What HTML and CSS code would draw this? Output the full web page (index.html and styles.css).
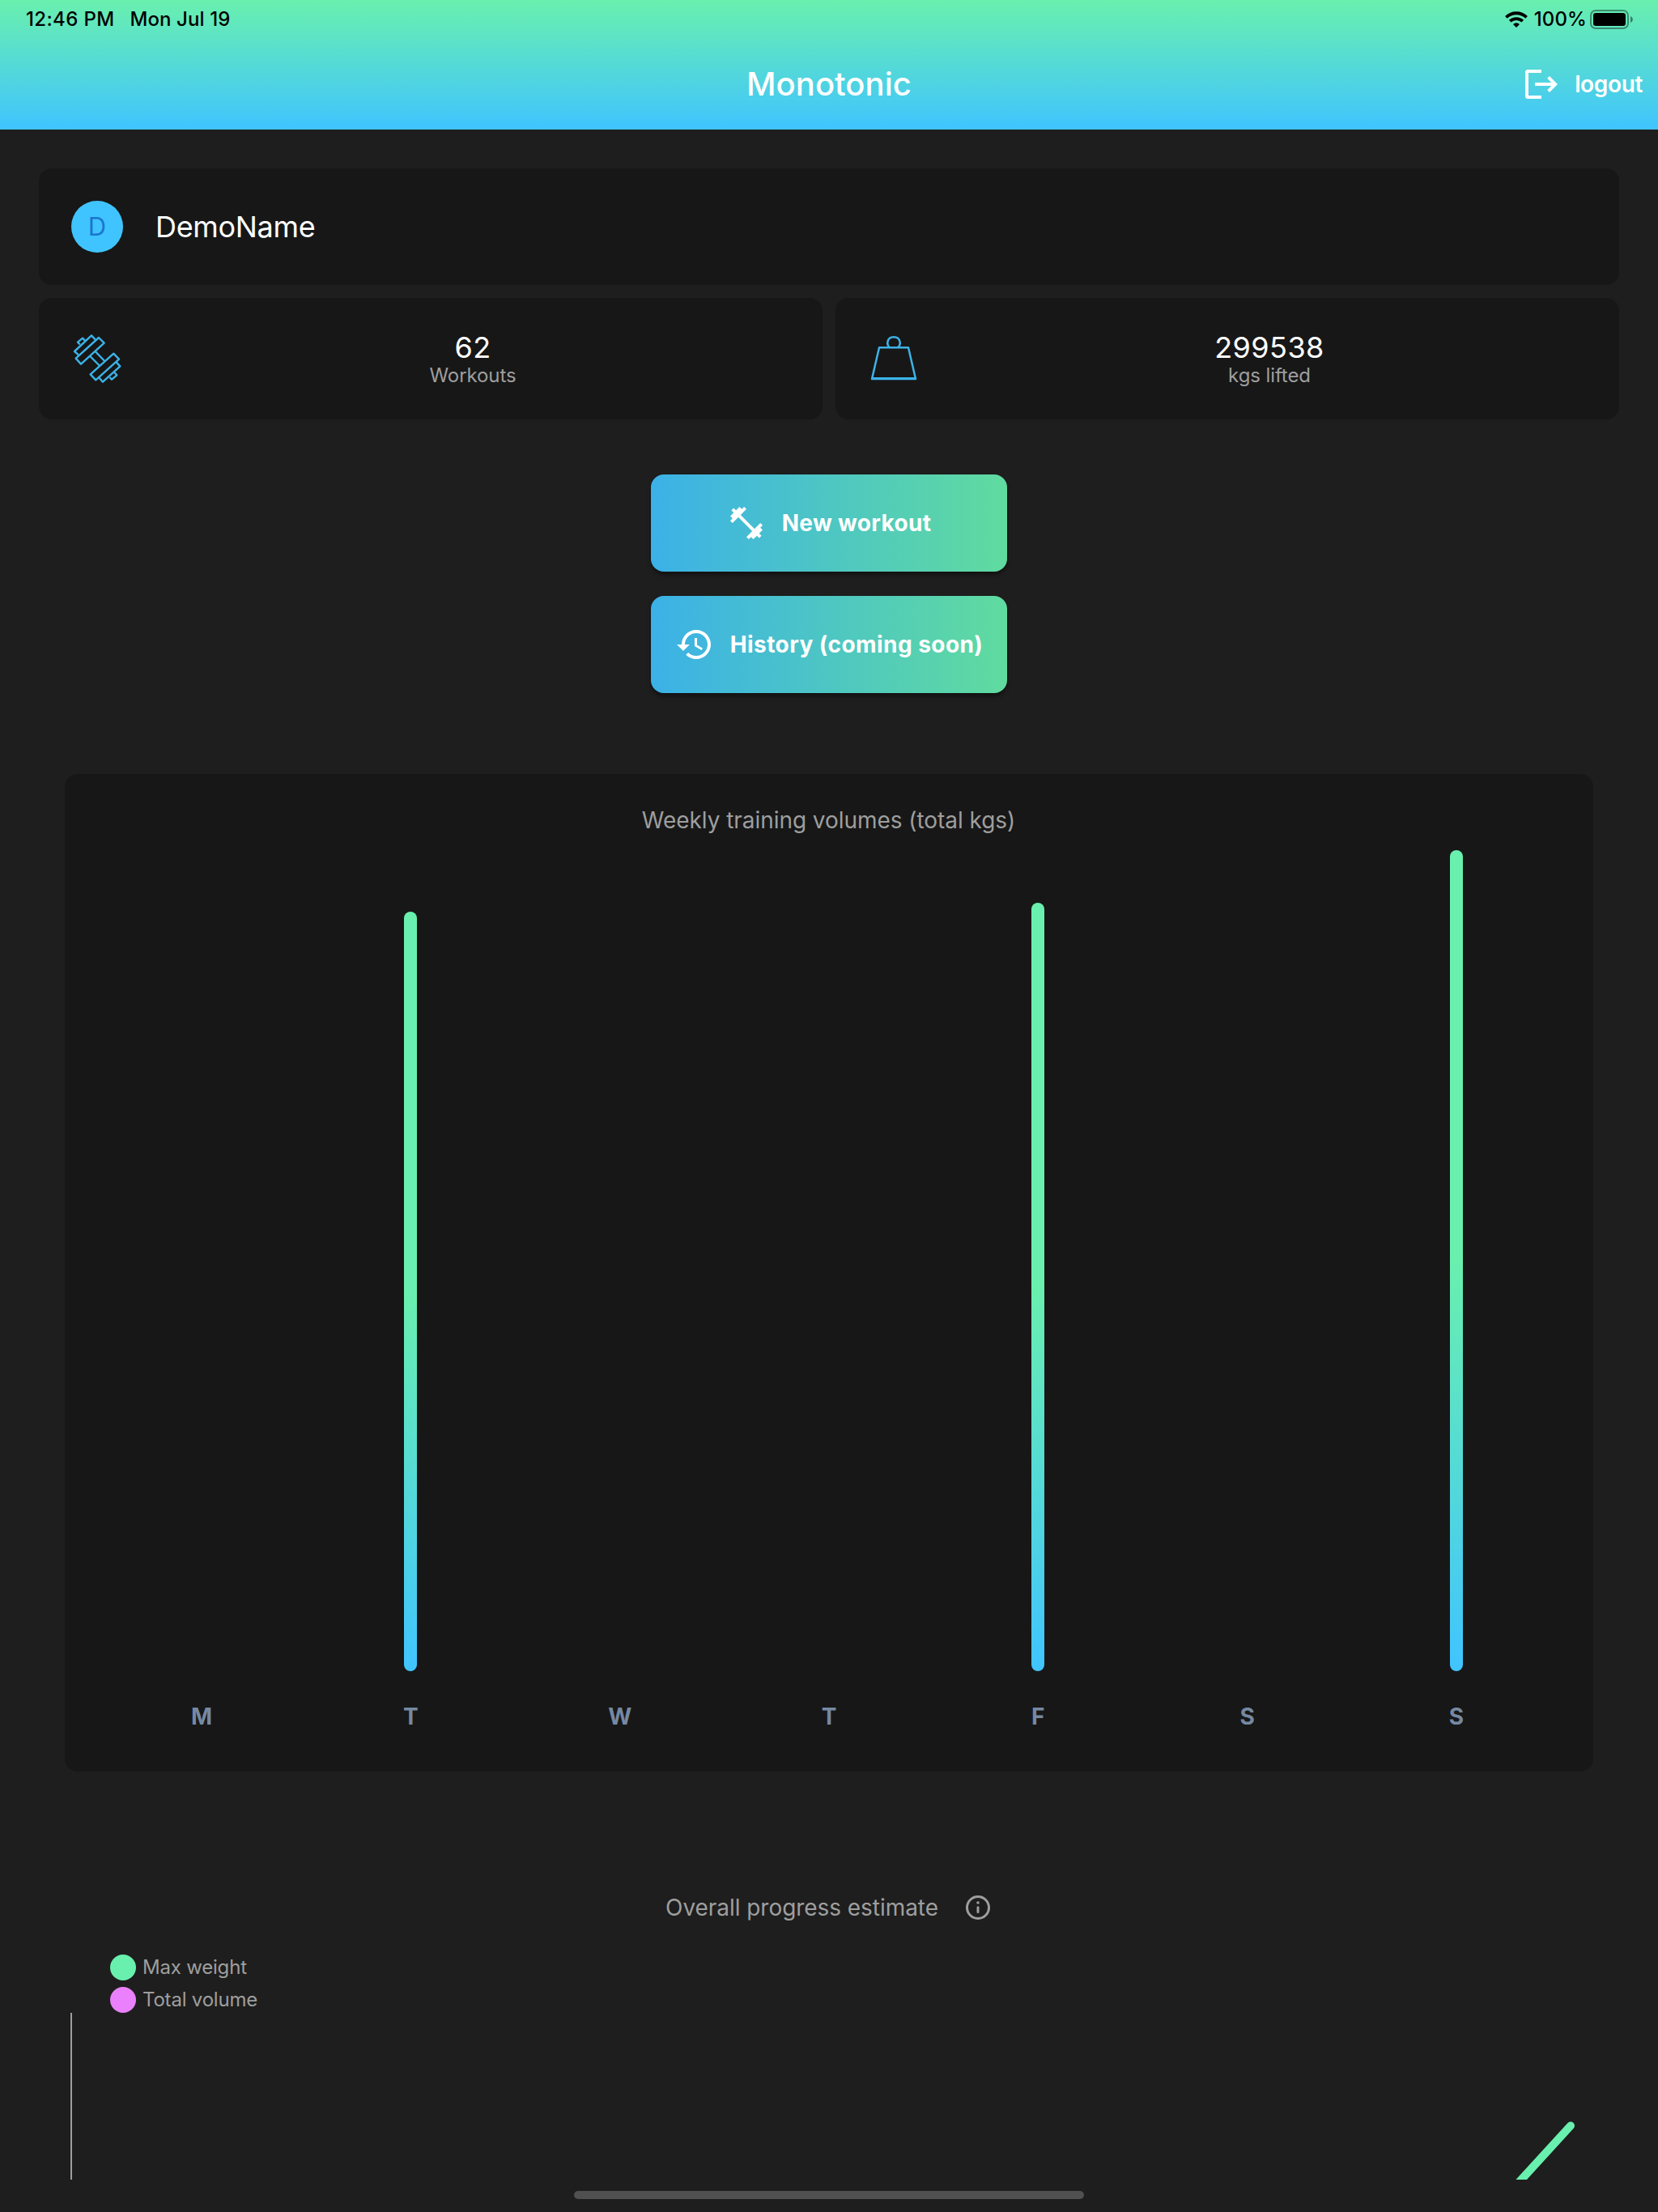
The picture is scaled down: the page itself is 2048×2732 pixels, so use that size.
FILE: index.html
```
<!DOCTYPE html>
<html lang="en">
<head>
<meta charset="utf-8">
<title>Monotonic</title>
<link rel="stylesheet" href="styles.css">
</head>
<body>
<div class="screen">
  <header class="header">
    <div class="status">
      <div class="status-left"><span class="time">12:46 PM</span><span class="date">Mon Jul 19</span></div>
      <div class="status-right">
        <svg class="wifi" width="28" height="20" viewBox="0 0 28 20" fill="none" stroke="#000" stroke-width="3.8">
          <path d="M1.4 7.400a18 18 0 0 1 25.200 0"/>
          <path d="M6.200 12.200a11.200 11.200 0 0 1 15.600 0"/>
          <path d="M14 20l-4-4.100a5.800 5.800 0 0 1 8 0z" fill="#000" stroke="none"/>
        </svg>
        <span class="charge">100%</span>
        <svg width="54" height="24" viewBox="0 0 54 24">
          <rect x="1" y="1" width="46" height="22" rx="6" fill="none" stroke="#000" stroke-opacity=".4" stroke-width="2"/>
          <rect x="4" y="4" width="40" height="16" rx="3.200"/>
          <path d="M50 8c3.800 1.400 3.800 6.600 0 8z" fill-opacity=".45"/>
        </svg>
      </div>
    </div>
    <div class="nav">
      <span></span>
      <h1 class="title">Monotonic</h1>
      <div class="logout">
        <svg width="40" height="36" viewBox="0 0 40 36" fill="#fff">
          <path d="M20 0H3.500Q0 0 0 3.500V32.500Q0 36 3.500 36H20V32H4V4H20z"/>
          <path d="M27.200 10.800L30 8L40 18L30 28L27.200 25.200L32.400 20H12V16H32.400z"/>
        </svg>
        <span>logout</span>
      </div>
    </div>
  </header>

  <main class="main">
    <section class="card profile">
      <div class="avatar">D</div>
      <div class="name">DemoName</div>
    </section>

    <section class="stats">
      <div class="card stat">
        <svg width="64" height="64" viewBox="144 633 192 192" fill="none" stroke="#3cb3e8" stroke-width="7.200" stroke-linejoin="round">
          <path d="M176 676L168 668L186 653L195 662"/>
          <path d="M171 715L156 702L219 643L233 658"/>
          <path d="M161 728L246 651L266 671L180 749z"/>
          <path d="M233 702L268 738M214 720L250 756"/>
          <path d="M215 787L301 710L321 731L235 808z"/>
          <path d="M248 800L261 815L325 757L311 742"/>
          <path d="M286 798L294 806L313 790L304 780"/>
        </svg>
        <div class="figure"><span class="value">62</span><span class="unit">Workouts</span></div>
      </div>
      <div class="card stat">
        <svg width="64" height="64" viewBox="0 0 64 64" fill="none" stroke="#3cb3e8" stroke-width="2.500" stroke-linejoin="round">
          <path d="M27 18.300C22.500 14.500 23.500 5.200 32 5.200S41.500 14.500 37 18.300"/>
          <path d="M14 18.300H50L59 57H5z"/>
          <path d="M5 56.600H59" stroke-width="3"/>
        </svg>
        <div class="figure"><span class="value">299538</span><span class="unit">kgs lifted</span></div>
      </div>
    </section>

    <section class="actions">
      <button class="action">
        <svg width="48" height="48" viewBox="0 0 24 24" fill="#fff"><path d="M20.570 14.860L22 13.430 20.570 12 17 15.570 8.430 7 12 3.430 10.570 2 9.140 3.430 7.710 2 5.570 4.140 4.140 2.710 2.710 4.140l1.430 1.430L2 7.710l1.430 1.430L2 10.570 3.430 12 7 8.430 15.570 17 12 20.570 13.430 22l1.430-1.430L16.290 22l2.140-2.140 1.430 1.430 1.430-1.430-1.430-1.430L22 16.290z"/></svg>
        <span>New workout</span>
      </button>
      <button class="action">
        <svg width="48" height="48" viewBox="0 0 24 24" fill="#fff"><path d="M13 3c-4.970 0-9 4.030-9 9H1l3.890 3.890.070.140L9 12H6c0-3.870 3.130-7 7-7s7 3.130 7 7-3.130 7-7 7c-1.930 0-3.680-.790-4.940-2.060l-1.420 1.420C8.270 19.990 10.510 21 13 21c4.970 0 9-4.030 9-9s-4.030-9-9-9zm-1 5v5l4.280 2.540.720-1.210-3.500-2.080V8H12z"/></svg>
        <span class="wide">History (coming soon)</span>
      </button>
    </section>

    <section class="card chart">
      <h2 class="caption">Weekly training volumes (total kgs)</h2>
      <div class="bars">
        <div class="day"><span class="label">M</span></div>
        <div class="day"><i class="bar" style="height:938px"></i><span class="label">T</span></div>
        <div class="day"><span class="label">W</span></div>
        <div class="day"><span class="label">T</span></div>
        <div class="day"><i class="bar" style="height:949px"></i><span class="label">F</span></div>
        <div class="day"><span class="label">S</span></div>
        <div class="day"><i class="bar" style="height:1014px"></i><span class="label">S</span></div>
      </div>
    </section>

    <section class="progress">
      <div class="progress-head">
        <h2 class="caption">Overall progress estimate</h2>
        <svg width="36" height="36" viewBox="0 0 36 36" fill="none" stroke="#9e9e9e" stroke-linecap="round">
          <circle cx="18" cy="18" r="13.500" stroke-width="3"/>
          <path d="M18 17.800V23.600" stroke-width="3"/>
          <circle cx="18" cy="12" r="1.800" fill="#9e9e9e" stroke="none"/>
        </svg>
      </div>
      <ul class="legend">
        <li><i class="dot green"></i>Max weight</li>
        <li><i class="dot pink"></i>Total volume</li>
      </ul>
      <svg class="plot" width="1913" height="206" viewBox="0 0 1913 206" fill="none">
        <path d="M1 0V206" stroke="#9e9e9e" stroke-width="2"/>
        <path d="M1853 139.500L1773 227" stroke="#69f0ae" stroke-width="10" stroke-linecap="round"/>
      </svg>
    </section>
  </main>

  <footer class="home"><div class="home-bar"></div></footer>
</div>
</body>
</html>
```
FILE: styles.css
```
* { box-sizing: border-box; margin: 0; padding: 0; }

body {
  background: #1e1e1e;
  color: #fff;
  font-family: Inter, "Liberation Sans", sans-serif;
}

svg { display: block; flex: none; }

.screen {
  display: flex;
  flex-direction: column;
  width: 2048px;
  height: 2732px;
  overflow: hidden;
}

.header {
  flex: none;
  height: 160px;
  background: linear-gradient(#69f0ae, #40c4ff);
}

.status {
  display: flex;
  justify-content: space-between;
  height: 48px;
  padding: 0 30px 0 32px;
  color: #000;
  font-size: 24px;
  font-weight: 500;
  line-height: 47px;
}
.status-left { display: flex; gap: 19px; }
.status-right { display: flex; align-items: center; }
.time { letter-spacing: 0.35px; }
.date { letter-spacing: 0.1px; }
.charge { margin: 0 4px 0 8px; line-height: 45px; padding-bottom: 2px; letter-spacing: 0.1px; }

.nav {
  display: grid;
  grid-template-columns: 1fr auto 1fr;
  align-items: center;
  height: 112px;
}
.title {
  padding-bottom: 1px;
  font-size: 40px;
  font-weight: 500;
  letter-spacing: 0.05px;
}
.logout {
  display: flex;
  align-items: center;
  justify-content: flex-end;
  gap: 21px;
  padding-right: 19px;
  font-size: 28px;
  font-weight: 600;
  letter-spacing: -0.35px;
}
.logout span { padding-bottom: 1px; }

.main {
  display: flex;
  flex: 1;
  flex-direction: column;
  padding: 48px 48px 0;
}

.card {
  border-radius: 16px;
  background: #171717;
}

.profile {
  display: flex;
  align-items: center;
  gap: 40px;
  height: 144px;
  padding: 0 40px;
}
.avatar {
  width: 64px;
  height: 64px;
  border-radius: 50%;
  background: #40c4ff;
  color: #1976d2;
  font-size: 31px;
  line-height: 64px;
  text-align: center;
}
.name { font-size: 36px; letter-spacing: -0.32px; }

.stats {
  display: grid;
  grid-template-columns: 1fr 1fr;
  gap: 16px;
  margin-top: 16px;
}
.stat {
  display: flex;
  align-items: center;
  height: 150px;
  padding-left: 40px;
}
.figure {
  display: flex;
  flex: 1;
  flex-direction: column;
  align-items: center;
}
.value { font-size: 36px; line-height: 40px; letter-spacing: 0.45px; }
.unit { color: #9e9e9e; font-size: 24px; line-height: 29px; letter-spacing: -0.1px; }

.actions {
  display: flex;
  flex-direction: column;
  align-items: center;
  gap: 30px;
  margin-top: 68px;
}
.action {
  display: flex;
  align-items: center;
  justify-content: center;
  gap: 20px;
  width: 440px;
  height: 120px;
  border: 0;
  border-radius: 16px;
  background: linear-gradient(90deg, #3bb1e7, #60db9f);
  box-shadow: 0 4px 5px rgba(0, 0, 0, 0.4);
  color: #fff;
  font: 700 28px Inter, "Liberation Sans", sans-serif;
  letter-spacing: 0.33px;
}
.action span { padding-bottom: 1px; }
.action .wide { letter-spacing: 0.43px; }

.caption {
  color: #9e9e9e;
  font-size: 28px;
  font-weight: 400;
  letter-spacing: -0.05px;
}

.chart {
  display: flex;
  flex-direction: column;
  height: 1232px;
  margin: 100px 32px 0;
  padding: 37px 40px 48px;
}
.chart .caption { padding-right: 1px; line-height: 40px; text-align: center; }
.bars {
  display: grid;
  flex: 1;
  grid-template-columns: repeat(7, 1fr);
}
.day {
  display: flex;
  flex-direction: column;
  align-items: center;
  justify-content: flex-end;
}
.bar {
  width: 16px;
  border-radius: 8px;
  background: linear-gradient(to top, #40c4ff, #69f0ae 50%);
}
.label {
  margin-top: 36px;
  color: #7589a2;
  font-size: 28px;
  font-weight: 700;
  line-height: 40px;
}

.progress {
  display: flex;
  flex-direction: column;
  margin-top: 150px;
}
.progress-head {
  display: flex;
  align-items: center;
  justify-content: center;
  gap: 31px;
  height: 36px;
}
.progress-head .caption { padding-bottom: 1px; }
.legend {
  display: flex;
  flex-direction: column;
  gap: 8px;
  margin: 40px 0 0 88px;
  list-style: none;
}
.legend li {
  display: flex;
  align-items: center;
  gap: 8px;
  height: 32px;
  color: #9e9e9e;
  font-size: 24px;
  line-height: 30px;
  letter-spacing: -0.2px;
}
.dot { width: 32px; height: 32px; border-radius: 50%; }
.green { background: #69f0ae; }
.pink { background: #ea80fc; }
.plot { margin-left: 39px; overflow: hidden; }

.home {
  display: flex;
  flex: none;
  justify-content: center;
  height: 40px;
  padding-top: 14px;
}
.home-bar {
  width: 630px;
  height: 10px;
  border-radius: 5px;
  background: #505050;
}
```
